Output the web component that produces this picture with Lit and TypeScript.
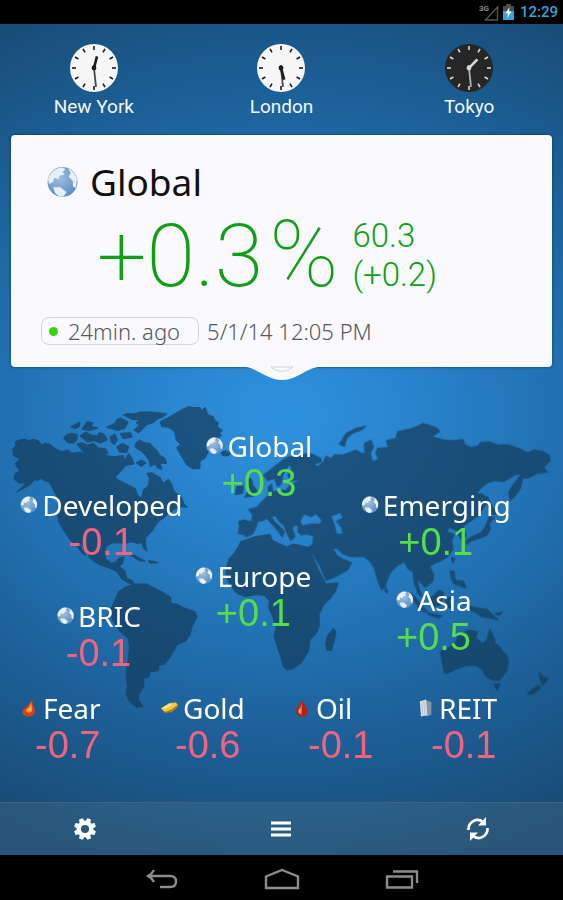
import { LitElement, html, css, svg } from "lit";
import { customElement, property } from "lit/decorators.js";

type Glyph = "globe" | "fire" | "gold" | "oil" | "building";

interface Quote {
  name: string;
  value: string;
  icon: Glyph;
}

interface Pin extends Quote {
  /** Centre of the pin, in percent of the map stage. */
  x: number;
  y: number;
}

const CITIES = [
  { name: "New York", hour: 12, minute: 29, night: false },
  { name: "London", hour: 5, minute: 29, night: false },
  { name: "Tokyo", hour: 1, minute: 29, night: true },
];

const PINS: Pin[] = [
  { name: "Global", value: "+0.3", icon: "globe", x: 46, y: 22.5 },
  { name: "Developed", value: "-0.1", icon: "globe", x: 18, y: 36 },
  { name: "Emerging", value: "+0.1", icon: "globe", x: 77.4, y: 36 },
  { name: "Europe", value: "+0.1", icon: "globe", x: 45, y: 52.5 },
  { name: "Asia", value: "+0.5", icon: "globe", x: 77, y: 58 },
  { name: "BRIC", value: "-0.1", icon: "globe", x: 17.5, y: 61.5 },
];

const COMMODITIES: Quote[] = [
  { name: "Fear", value: "-0.7", icon: "fire" },
  { name: "Gold", value: "-0.6", icon: "gold" },
  { name: "Oil", value: "-0.1", icon: "oil" },
  { name: "REIT", value: "-0.1", icon: "building" },
];

const glyphs = {
  globe: svg`
    <defs><radialGradient id="sea" cx=".4" cy=".35" r=".7">
      <stop offset="0" stop-color="#9dc0e2"/><stop offset="1" stop-color="#5a8bc0"/>
    </radialGradient></defs>
    <circle cx="15" cy="15" r="14.5" fill="url(#sea)"/>
    <path fill="#e8f0f7" d="M3 8Q8 1 15 1L18 3 15 5 17 8 12 9 11 12 7 11 6 15 2 17 1 12ZM20 2Q27 5 29 12L28 21 25 19 25 14 21 10 23 6ZM6 20L13 20 19 25 16 29 12 29 8 26Z"/>`,
  fire: svg`
    <path fill="#d8401c" d="M21 2C20 10 24 12 25 19C26 26 21 30 14 30C7 30 2 26 4 20C6 15 9 17 11 13C14 9 15 7 21 2Z"/>
    <path fill="#f7932a" d="M20 3C18 12 22 15 20 21C17 25 10 24 9 19C12 18 17 12 20 3Z"/>
    <path fill="#fbc04b" d="M12 18L18 14 18 20 13 22Z"/>`,
  gold: svg`
    <path fill="#b87a16" d="M1 17L8 24 20 23 30 14 30 9 15 14Z"/>
    <path fill="#f4c842" d="M1 16L16 7 27 6 30 10 19 18 8 22Z"/>
    <path fill="#fdeb9a" d="M3 16L16 8 20 10 9 17Z"/>`,
  oil: svg`
    <path fill="#b8200d" d="M15 1C16 9 25 14 25 21C25 27 20 30 15 30C9 30 5 26 5 21C5 14 14 9 15 1Z"/>
    <path fill="#ea5a2d" d="M15 5C14 13 8 16 9 22C10 26 13 27 15 27Z"/>
    <path fill="#f6b69a" d="M10 18L13 16 12 25 9 23Z"/>`,
  building: svg`
    <path fill="#8795a0" d="M17 2L26 5 26 27 17 30Z"/>
    <path fill="#d5dee4" d="M6 4L17 1 19 28 8 30Z"/>
    <path stroke="#a4b3bf" stroke-width="1" fill="none" d="M9 4L11 28M13 3L15 28"/>`,
};

@customElement("city-clock")
export class CityClock extends LitElement {
  @property() name = "";
  @property({ type: Number }) hour = 0;
  @property({ type: Number }) minute = 0;
  @property({ type: Boolean }) night = false;

  static styles = css`
    :host {
      display: flex;
      flex-direction: column;
      align-items: center;
      font: 400 19px/28px Roboto, sans-serif;
      color: #f2f6fb;
    }
    .face {
      width: 50px;
      height: 50px;
    }
  `;

  render() {
    const ink = this.night ? "#d8d8d8" : "#1c1c1c";
    const hourAngle = (this.hour % 12) * 30 + this.minute / 2;
    return html`
      <svg class="face" viewBox="-25 -25 50 50" aria-hidden="true">
        <circle r="24" fill=${this.night ? "#262626" : "#f6f6f6"} />
        ${Array.from(
          { length: 12 },
          (_, i) => svg`<path d="M0-22V-18" stroke=${ink} stroke-width="1.6" transform="rotate(${i * 30})"/>`
        )}
        <path d="M0 2V-12" stroke=${ink} stroke-width="2.6" transform="rotate(${hourAngle})" />
        <path d="M0 3V-19" stroke=${ink} stroke-width="1.8" opacity=".8" transform="rotate(${this.minute * 6})" />
        <circle r="2.4" fill=${ink} />
      </svg>
      <span>${this.name}</span>
    `;
  }
}

@customElement("quote-tag")
export class QuoteTag extends LitElement {
  @property() name = "";
  @property() value = "";
  @property() icon: Glyph = "globe";

  static styles = css`
    :host {
      display: block;
      white-space: nowrap;
    }
    .name {
      display: flex;
      align-items: center;
      gap: 4px;
      font: 400 28px/36px "Noto Sans", sans-serif;
      color: #fff;
    }
    .icon {
      width: 18px;
      height: 18px;
      flex: none;
    }
    .wide {
      gap: 5px;
    }
    .value {
      font: 400 38px/38px "Liberation Sans", sans-serif;
      text-align: center;
      color: #57dc4b;
    }
    .down {
      color: #f0647f;
    }
    .wide + .value {
      text-align: left;
      padding-left: 15px;
    }
  `;

  render() {
    return html`
      <div class="name ${this.icon === "globe" ? "" : "wide"}">
        <svg class="icon" viewBox="0 0 30 31" aria-hidden="true">${glyphs[this.icon]}</svg>
        <span>${this.name}</span>
      </div>
      <div class="value ${this.value.startsWith("-") ? "down" : ""}">${this.value}</div>
    `;
  }
}

@customElement("world-map")
export class WorldMap extends LitElement {
  static styles = css`
    :host,
    .map {
      display: block;
      width: 100%;
    }
  `;

  render() {
    return html`
      <svg class="map" viewBox="0 0 1689 980" aria-hidden="true">
        <g fill="#153b5a" stroke="#153b5a" stroke-width="3" stroke-linejoin="round" opacity=".7">
          <path d="M45 155L58 150 75 147 88 153 96 148 115 152 125 165 136 159 150 163 166 176 185 185 205 180 215 190 240 186 262 194 290 200 315 196 340 200 370 196 374 212 385 190 395 203 402 222 378 226 358 248 345 262 360 273 385 285 405 295 413 316 425 325 430 300 445 287 448 265 440 250 455 248 468 256 480 262 490 280 505 268 515 282 520 300 532 312 545 322 552 342 562 352 540 350 520 360 505 372 490 385 478 392 470 402 455 425 437 443 436 462 441 484 430 475 425 458 410 460 395 455 375 460 340 458 320 468 312 485 318 508 335 520 348 516 355 505 372 500 368 520 358 530 374 542 380 565 398 572 402 584 384 578 366 568 350 545 330 535 300 525 280 513 268 503 265 490 250 470 236 455 248 482 258 496 246 490 230 468 212 452 190 420 175 395 172 360 178 330 165 310 155 290 145 275 132 272 125 265 112 272 104 268 90 285 70 296 50 305 72 286 75 278 60 280 42 268 45 250 60 243 50 230 46 220 60 207 40 197 38 175 48 168Z"/>
          <path d="M480 95L510 80 530 68 548 58 565 50 585 53 600 52 604 62 615 52 625 75 640 80 645 92 655 98 652 110 668 122 658 128 664 136 650 150 640 155 642 175 625 185 615 205 600 213 600 235 580 237 560 225 548 205 535 184 530 172 542 164 528 150 524 125 505 112 485 110Z"/>
          <path d="M370 75L385 70 400 72 420 66 450 66 478 68 500 72 488 82 474 86 460 98 440 104 430 115 415 130 402 120 418 106 408 98 420 90 395 88Z"/>
          <path d="M420 150L432 158 450 160 462 174 470 180 480 196 495 205 500 220 480 220 486 238 472 234 466 222 450 230 448 212 436 196 424 184 405 172 408 158Z"/>
          <path d="M230 162L245 158 262 165 280 160 296 174 316 176 324 190 290 200 262 194 248 184Z"/>
          <path d="M190 145L200 134 215 130 232 134 230 152 220 160 204 158Z"/>
          <path d="M240 138L256 126 272 134 290 138 298 128 312 132 322 150 300 160 284 152 262 156Z"/>
          <path d="M212 110L240 96 238 110 224 116ZM260 95L278 98 274 110 294 114 268 122 246 118ZM318 112L345 100 350 88 362 84 384 96 375 115 352 122 336 116ZM330 140L345 132 352 150 342 164 334 156ZM360 130L392 128 396 142 370 146ZM350 170L368 160 386 170 380 188 358 186ZM408 218L424 210 438 218 424 230Z"/>
          <path d="M390 495L405 496 420 505 435 513 418 513 403 503ZM445 512L460 514 475 518 450 520ZM662 188L676 182 692 190 684 198 668 197Z"/>
          <path d="M375 592L400 582 440 582 465 595 478 602 490 608 512 622 512 640 530 642 548 652 585 665 591 680 576 710 570 735 555 755 532 763 520 785 505 810 494 822 476 826 476 842 450 846 445 862 430 865 432 888 415 915 415 930 430 950 410 952 388 936 378 910 382 890 378 850 385 810 388 770 384 745 360 725 340 695 330 665 345 630 355 605Z"/>
          <path d="M715 470L722 455 765 440 810 433 816 450 835 460 860 470 880 462 925 472 938 500 955 538 972 572 978 582 1015 578 1006 605 990 626 970 646 957 674 958 708 950 728 930 750 926 782 904 818 880 836 860 840 850 830 842 800 822 740 828 714 818 680 806 655 808 632 792 616 770 614 735 620 710 610 690 585 679 560 678 535 686 508 702 490Z"/>
          <path d="M1000 715L1008 725 1002 755 994 782 980 780 977 760 982 738Z"/>
          <path d="M740 262L755 268 758 284 772 304 762 318 734 322 745 302 736 280ZM710 290L730 288 728 310 706 314Z"/>
          <g transform="translate(843 0)">
            <path fill-rule="evenodd" d="M82 472L95 463 98 437 75 432 60 435 50 425 52 410 45 405 33 413 42 440 30 452 18 430 8 405-5 395-18 376-28 380-22 392-5 408 10 424 4 442-8 424-28 402-42 385-55 392-70 395-75 412-85 432-105 440-112 434-128 430-124 410-128 395-112 390-88 395-85 375-98 358-73 352-58 335-38 315-38 290-28 282-25 305 15 300 27 285 62 270 28 272 20 255 32 235 25 225 10 245 5 260 0 283-10 290-20 265-40 272-53 255-33 240-10 222 12 205 38 197 67 193 85 190 100 195 120 205 120 216 100 222 110 230 128 214 135 198 150 206 160 194 185 195 205 188 225 180 238 188 252 192 250 160 270 150 278 170 268 190 275 215 292 208 284 188 290 175 322 172 316 152 345 145 350 125 390 116 412 108 425 100 440 104 470 115 476 125 452 140 490 150 520 152 545 148 552 164 570 172 590 168 598 158 625 155 650 165 680 164 715 176 740 188 760 180 785 184 805 195 808 212 788 232 800 246 770 250 740 265 725 263 718 296 704 316 688 332 683 305 698 282 722 250 700 255 670 275 640 272 622 278 605 290 585 310 604 312 616 322 614 345 590 380 562 398 545 410 555 438 540 450 528 422 505 412 497 424 520 434 512 452 516 478 500 500 478 514 460 520 446 530 458 552 455 575 432 592 420 578 408 568 414 596 424 622 412 612 400 580 396 545 382 538 370 515 350 526 330 545 318 570 312 590 302 600 290 572 280 535 268 515 250 500 210 500 185 492 170 476 155 474 168 496 186 508 212 518 200 540 160 562 135 572 118 530 96 494 86 486ZM70 372L90 380 105 372 122 390 118 402 90 402 64 408 57 392ZM150 378L178 368 186 384 166 394 182 412 186 432 166 432 160 406Z"/>
            <path d="M255 108L225 115 195 130 184 148 174 162 190 170 196 146 215 130 245 118ZM625 380L640 384 624 402 628 416 618 436 590 447 572 452 558 464 556 452 572 440 600 428 614 408ZM618 318L634 350 650 372 634 372 622 350ZM512 502L522 505 515 520ZM508 542L520 545 522 568 532 590 518 580 510 564ZM312 590L320 602 318 610 312 604Z"/>
          </g>
          <g transform="translate(843 570)">
            <path d="M388 40L404 52 424 78 440 96 424 94 404 70ZM440 98L484 108 472 114 442 104ZM446 56L474 30 488 38 478 76 456 80ZM494 54L520 50 504 62 512 84 498 82ZM565 78L590 84 620 88 634 104 652 120 628 114 600 110 585 98 568 90ZM640 102L665 96 656 106ZM520 0L548 4 556 24 540 20Z"/>
            <path d="M478 215L500 205 525 185 530 170 545 158 562 150 590 155 584 175 605 190 618 180 626 148 640 175 642 190 657 200 665 214 678 228 683 245 675 275 655 302 635 300 615 290 605 272 596 262 580 255 550 258 520 270 505 278 490 280 486 256Z"/>
            <path d="M638 312L658 312 648 331ZM775 276L786 290 802 296 785 316 778 300ZM768 316L780 322 764 336 750 344 739 341Z"/>
          </g>
        </g>
      </svg>
    `;
  }
}

@customElement("app-root")
export class AppRoot extends LitElement {
  static styles = css`
    :host {
      display: flex;
      flex-direction: column;
      min-height: 100vh;
      background: #000;
    }
    .status {
      display: flex;
      justify-content: flex-end;
      align-items: center;
      gap: 4px;
      height: 24px;
      padding-right: 5px;
      font: 500 15px/24px Roboto, sans-serif;
      color: #35a6d3;
    }
    .signal {
      width: 20px;
      height: 18px;
    }
    .battery {
      width: 11px;
      height: 18px;
      margin-right: 2px;
    }
    .screen {
      flex: 1;
      display: flex;
      flex-direction: column;
      background: radial-gradient(ellipse 100% 56% at 50% 47%, #2e91df 0%, #2a86d0 20%, #2273b5 46%, #1c5e95 72%, #184a72 100%);
    }
    .clocks {
      display: grid;
      grid-template-columns: repeat(3, 1fr);
      padding: 19px 0 14px;
    }
    .card {
      position: relative;
      margin: 0 11px;
      padding: 24px 30px 22px;
      border-radius: 4px;
      background: #f9f9fe;
      box-shadow: 0 0 3px #0b3458;
    }
    .title {
      display: flex;
      align-items: center;
      gap: 12px;
      margin: 0;
      padding-left: 6px;
      font: 400 37px/46px "Noto Sans", sans-serif;
      color: #111;
    }
    .title svg {
      width: 31px;
      height: 32px;
    }
    .figures {
      display: flex;
      align-items: center;
      height: 100px;
      padding-left: 56px;
      color: #0f9f14;
      font-family: Roboto, sans-serif;
      font-weight: 300;
    }
    .change {
      display: flex;
      align-items: baseline;
      gap: 6px;
      margin-right: 14px;
      font-size: 88px;
      font-weight: 200;
      line-height: 100px;
    }
    .unit {
      font-size: 93px;
      font-weight: 100;
    }
    .points {
      font-size: 33px;
      line-height: 39px;
    }
    .updated {
      display: flex;
      align-items: center;
      gap: 8px;
      margin-top: 12px;
      font: 300 22px/28px "Noto Sans", sans-serif;
      color: #55595e;
    }
    .ago {
      display: flex;
      align-items: center;
      gap: 10px;
      height: 26px;
      padding: 0 18px 0 7px;
      border: 1px solid #d3d5d9;
      border-radius: 8px;
    }
    .dot {
      width: 9px;
      height: 9px;
      border-radius: 50%;
      background: #35d40f;
    }
    .pull {
      position: absolute;
      top: 100%;
      left: 50%;
      width: 84px;
      height: 15px;
      margin: -1px 0 0 -42px;
      padding: 0;
      border: 0;
      background: none;
    }
    .pull svg {
      display: block;
    }
    .stage {
      position: relative;
      flex: 1;
      padding: 23px 0 36px;
    }
    .pin {
      position: absolute;
      transform: translate(-50%, -50%);
    }
    .row {
      position: absolute;
      inset: auto 0 38px 20px;
      display: grid;
      grid-template-columns: 140fr 133fr 123fr 147fr;
    }
    .toolbar {
      display: grid;
      grid-template-columns: repeat(3, 1fr);
      height: 52px;
      padding: 0;
      border-top: 1px solid #41637d;
      background: rgba(150, 160, 165, 0.14);
    }
    .tool,
    .key {
      display: flex;
      align-items: center;
      justify-content: center;
      padding: 0;
      border: 0;
      background: none;
    }
    .edge-start {
      padding-right: 18px;
    }
    .edge-end {
      padding-left: 18px;
    }
    .nav {
      display: flex;
      justify-content: center;
      gap: 84px;
      height: 45px;
      padding-top: 2px;
      box-sizing: border-box;
    }
    .key {
      width: 36px;
    }
  `;

  render() {
    return html`
      <header class="status">
        <svg class="signal" viewBox="0 0 20 18" aria-label="3G signal">
          <path d="M6.500 17H18.500V4Z" fill="none" stroke="#555" stroke-width="1.400" />
          <text x="0" y="8" font-family="Roboto" font-size="8" font-weight="700" fill="#8a8a8a">3G</text>
        </svg>
        <svg class="battery" viewBox="0 0 11 18" aria-label="Battery charging">
          <path d="M3 1H8V3H11V17H0V3H3Z" fill="#4b4b4b" />
          <path d="M0 8H11V17H0Z" fill="#35a6d3" />
          <path d="M6.500 4L2.500 10.500H5L4 15.500L8.500 8.500H6Z" fill="#fff" />
        </svg>
        <span>12:29</span>
      </header>

      <main class="screen">
        <section class="clocks">
          ${CITIES.map(
            (c) => html`<city-clock name=${c.name} .hour=${c.hour} .minute=${c.minute} .night=${c.night}></city-clock>`
          )}
        </section>

        <section class="card">
          <h1 class="title">
            <svg viewBox="0 0 30 30" aria-hidden="true">${glyphs.globe}</svg>
            Global
          </h1>
          <div class="figures">
            <div class="change"><span>+0.3</span><span class="unit">%</span></div>
            <div class="points">
              <div>60.3</div>
              <div>(+0.2)</div>
            </div>
          </div>
          <div class="updated">
            <span class="ago"><i class="dot"></i>24min. ago</span>
            <time>5/1/14 12:05 PM</time>
          </div>
          <button class="pull" aria-label="Show details">
            <svg viewBox="0 0 84 15" width="84" height="15">
              <path d="M0 0C18 1 26 14 42 14S66 1 84 0Z" fill="#f9f9fe" />
              <path d="M31 1H53Q42 10 31 1Z" fill="none" stroke="#cfd2d8" />
            </svg>
          </button>
        </section>

        <section class="stage">
          <world-map></world-map>
          ${PINS.map(
            (p) => html`<quote-tag
              class="pin"
              style="left:${p.x}%;top:${p.y}%"
              name=${p.name}
              value=${p.value}
              icon=${p.icon}
            ></quote-tag>`
          )}
          <div class="row">
            ${COMMODITIES.map((q) => html`<quote-tag name=${q.name} value=${q.value} icon=${q.icon}></quote-tag>`)}
          </div>
        </section>

        <nav class="toolbar">
          <button class="tool edge-start" aria-label="Settings">
            <svg width="22" height="24" viewBox="-12 -12 24 24">
              <circle r="6.700" fill="none" stroke="#fff" stroke-width="4.600" />
              ${[0, 45, 90, 135, 180, 225, 270, 315].map(
                (a) => svg`<path d="M-3-8L-2-12H2L3-8Z" fill="#fff" transform="rotate(${a + 22.5})"/>`
              )}
            </svg>
          </button>
          <button class="tool" aria-label="Menu">
            <svg width="20" height="16" viewBox="0 0 20 16">
              <path d="M0 2H20M0 8H20M0 14H20" stroke="#fff" stroke-width="3" />
            </svg>
          </button>
          <button class="tool edge-end" aria-label="Refresh">
            <svg width="22" height="24" viewBox="0 0 22 24">
              <path d="M1.500 13C1 5 10 0 16 5M20.500 11C21 19 12 24 6 19" fill="none" stroke="#fff" stroke-width="2.600" />
              <path d="M19 0V8.500H11ZM3 24V15.500H11Z" fill="#fff" />
            </svg>
          </button>
        </nav>
      </main>

      <footer class="nav">
        <button class="key" aria-label="Back">
          <svg width="32" height="20" viewBox="0 0 32 20" fill="none" stroke="#8c8c8c" stroke-width="2.400">
            <path d="M3 7H24Q30 7 30 12.500T24 18H14" />
            <path d="M8 1Q6 5 2 7Q6 9 8 13" />
          </svg>
        </button>
        <button class="key" aria-label="Home">
          <svg width="36" height="22" viewBox="0 0 36 22" fill="none" stroke="#8c8c8c" stroke-width="2.400">
            <path d="M2 20V8.500L18 2L34 8.500V20Z" />
          </svg>
        </button>
        <button class="key" aria-label="Recent apps">
          <svg width="34" height="20" viewBox="0 0 34 20" fill="none" stroke="#8c8c8c" stroke-width="2.400">
            <path d="M2 7.500H27V18.500H2ZM8 2.500H32V14" />
          </svg>
        </button>
      </footer>
    `;
  }
}
